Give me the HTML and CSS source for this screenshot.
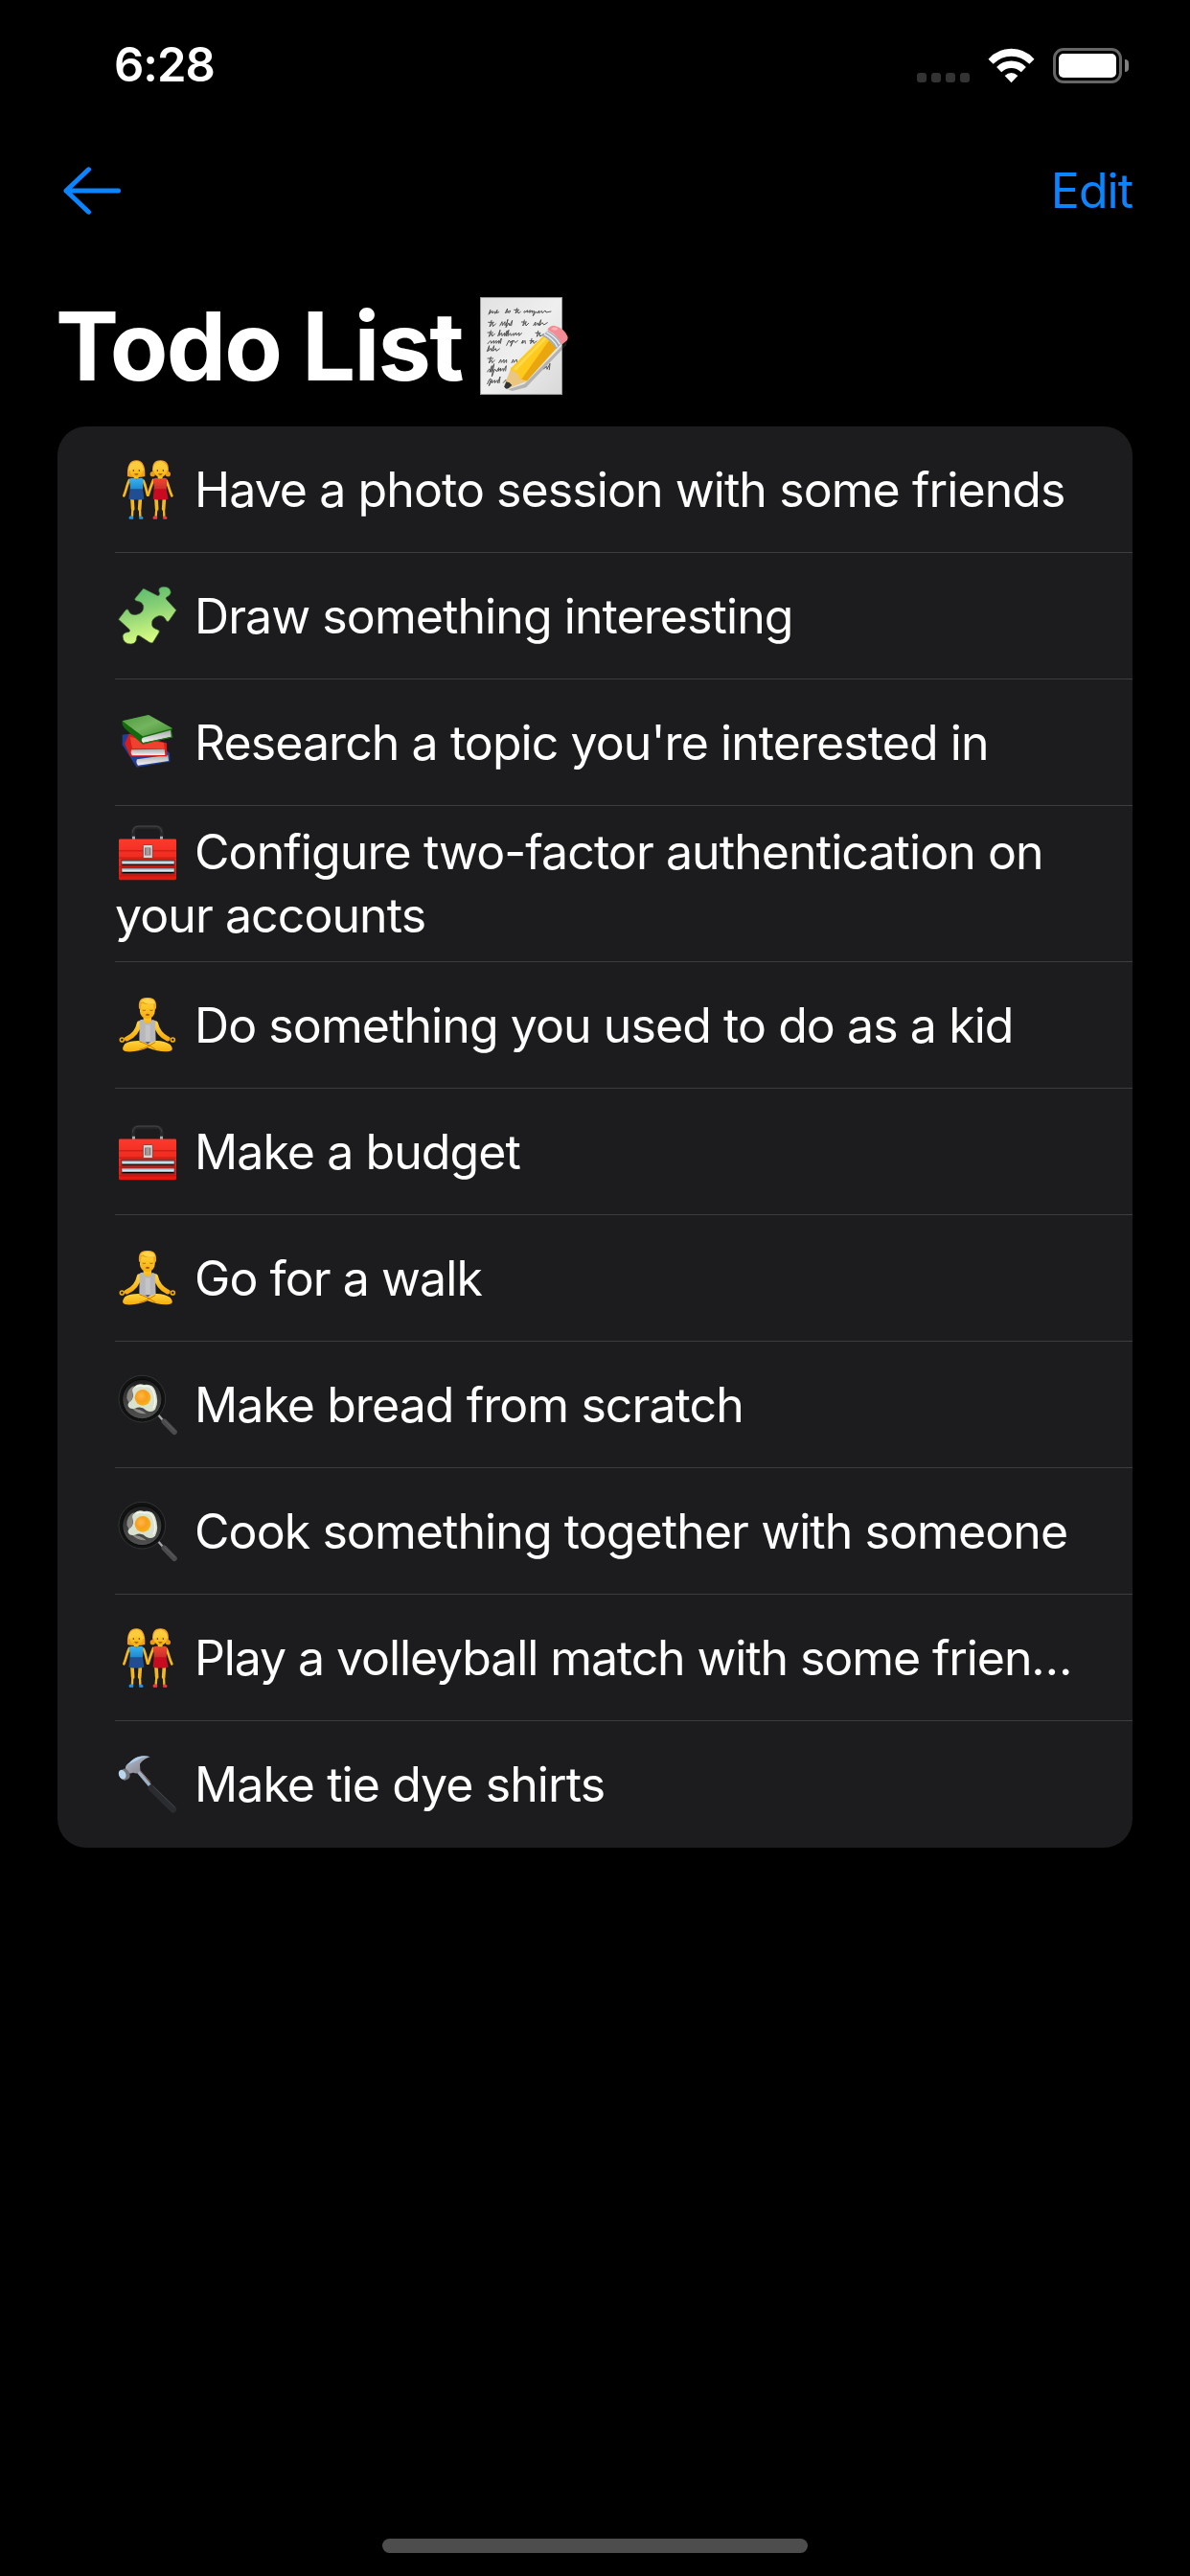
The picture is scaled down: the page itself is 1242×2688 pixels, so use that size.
FILE: index.html
```html
<!DOCTYPE html>
<html lang="en">
<head>
<meta charset="utf-8">
<title>Todo List</title>
<link rel="stylesheet" href="styles.css">
</head>
<body>
<svg class="sprite" aria-hidden="true">
  <defs>
    <linearGradient id="gPuzzle" x1="0" y1="0" x2="0.25" y2="1"><stop offset="0" stop-color="#4fb86c"/><stop offset=".45" stop-color="#86cf75"/><stop offset="1" stop-color="#d6fb82"/></linearGradient>
    <linearGradient id="gBook" x1="0" y1="0" x2="1" y2="1"><stop offset="0" stop-color="#4c9a3c"/><stop offset=".5" stop-color="#74b45f"/><stop offset="1" stop-color="#3c8c2c"/></linearGradient>
    <linearGradient id="gPages" x1="0" y1="0" x2="0" y2="1"><stop offset="0" stop-color="#a9a9a9"/><stop offset="1" stop-color="#f4f4f4"/></linearGradient>
    <linearGradient id="gBox" x1="0" y1="0" x2="0" y2="1"><stop offset="0" stop-color="#fb3a2c"/><stop offset="1" stop-color="#e3190f"/></linearGradient>
    <linearGradient id="gSkin" x1="0" y1="0" x2="0" y2="1"><stop offset="0" stop-color="#ffd43c"/><stop offset="1" stop-color="#f5ae0c"/></linearGradient>
    <linearGradient id="gBlueTop" x1="0" y1="0" x2="0" y2="1"><stop offset="0" stop-color="#38b4f4"/><stop offset="1" stop-color="#1f86cc"/></linearGradient>
    <linearGradient id="gRedTop" x1="0" y1="0" x2="0" y2="1"><stop offset="0" stop-color="#f04a34"/><stop offset="1" stop-color="#c92c28"/></linearGradient>
    <radialGradient id="gYolk" cx=".4" cy=".4" r=".6"><stop offset="0" stop-color="#ffb84a"/><stop offset=".6" stop-color="#f89e1c"/><stop offset="1" stop-color="#f5b416"/></radialGradient>
    <linearGradient id="gPan" x1="0" y1="0" x2="0" y2="1"><stop offset="0" stop-color="#1c1c1c"/><stop offset=".5" stop-color="#3c3c3c"/><stop offset="1" stop-color="#505050"/></linearGradient>
    <linearGradient id="gSteel" x1="0" y1="0" x2="1" y2="1"><stop offset="0" stop-color="#a9c4de"/><stop offset=".5" stop-color="#9a9ca8"/><stop offset="1" stop-color="#85808a"/></linearGradient>
    <linearGradient id="gPaper" x1="0" y1="0" x2="1" y2="1"><stop offset="0" stop-color="#e2e2e2"/><stop offset=".5" stop-color="#efefef"/><stop offset="1" stop-color="#d8d8d8"/></linearGradient>

    <symbol id="friends" viewBox="30 9 216 216">
      <g fill="none" stroke="#f5b81c" stroke-linecap="round">
        <path stroke-width="8" d="M75 96C68 108 66 126 58 145M119 98C126 112 128 128 132 143"/>
        <path stroke-width="8" d="M150 96C144 112 138 128 134 143M191 98C198 112 200 128 208 145"/>
        <path stroke-width="11" d="M84 156L86 186M109 156L107 186M159 156L161 186M184 156L182 186"/>
        <path stroke-width="7" d="M85 186L84 208M108 186L109 208M160 186L158 208M183 186L184 208"/>
      </g>
      <path fill="#2196e8" d="M75 210q7-5 13 1l-1 7H75q-3-4 0-8zM105 211q6-6 13 1 1 4-1 6h-11z"/>
      <path fill="#ee3a44" d="M150 210q7-5 13 1l-1 7h-12q-3-4 0-8zM180 211q6-6 13 1 1 4-1 6h-11z"/>
      <path fill="#f0a01c" d="M69 84Q66 34 97 34Q126 34 124 84Q112 88 97 87Q78 88 69 84z"/>
      <path fill="#f8c229" d="M89 78h15v14H89z"/>
      <circle fill="#e99b12" cx="148" cy="77" r="8"/><circle fill="#e99b12" cx="196" cy="77" r="8"/>
      <path fill="#f0a01c" d="M148 72Q143 34 172 34Q202 34 197 72Z"/>
      <path fill="#f8c229" d="M164 78h15v14h-15z"/>
      <ellipse fill="url(#gSkin)" cx="97" cy="67" rx="20" ry="20"/><ellipse fill="url(#gSkin)" cx="172" cy="67" rx="20" ry="20"/>
      <path fill="#f9cb3f" d="M72 67Q73 38 99 36Q118 40 120 67Q107 62 101 47Q94 61 72 67zM149 66Q150 38 174 36Q193 42 196 66Q182 60 177 47Q168 61 149 66z"/>
      <path stroke="#70400d" stroke-width="4" stroke-linecap="round" d="M88 65v2M106 65v2M163 65v2M181 65v2"/>
      <path fill="#94500f" d="M90 76h14q-7 9-14 0zM165 76h14q-7 9-14 0z"/>
      <path fill="url(#gBlueTop)" d="M76 92Q82 88 88 90Q97 97 106 90Q113 88 119 93L117 126H77Q79 111 74 99z"/>
      <path fill="#214e92" d="M77 124h40l4 31q-24 5-48 0z"/>
      <path fill="url(#gRedTop)" d="M151 92Q157 88 163 90Q172 97 181 90Q188 88 193 93L191 126H152Q154 111 149 99z"/>
      <path fill="#c80b20" d="M152 124h39l6 31q-25 5-48 0z"/>
    </symbol>

    <symbol id="puzzle" viewBox="30 15 216 216">
      <path fill="url(#gPuzzle)" stroke="#40592f" stroke-width="2" stroke-linejoin="round" d="M119 45L162 67Q169 70 170 61Q161 43 180 40Q203 38 205 58Q203 68 192 72Q186 76 195 84L222 113L198 148Q192 151 188 141Q181 129 166 131Q142 139 146 161Q149 170 163 174Q171 176 168 183L149 214Q145 218 137 213L108 194Q99 189 98 199Q98 217 81 219Q56 220 54 195Q55 184 69 182Q80 181 75 173L41 142L64 112Q71 106 74 117Q80 130 98 127Q122 122 119 99Q115 87 100 85Q88 82 94 75Z"/>
    </symbol>

    <symbol id="books" viewBox="30 21 216 216">
      <path fill="#203f98" d="M53 113L76 110L194 164L201 171L202 197L98 215L53 145z"/>
      <path fill="url(#gPages)" d="M99 190L196 176L198 195L102 209Q94 200 99 190z"/>
      <path fill="#d81e1a" d="M74 110L192 139L193 181L78 181L60 141z"/>
      <path fill="#ef4130" d="M77 120L183 139L185 157L84 156z"/>
      <path fill="url(#gPages)" d="M82 160L185 158L187 177L84 178Q77 169 82 160z"/>
      <path fill="#14680e" d="M53 70L135 51L210 93L207 99L211 120L117 143L61 94Q50 83 53 70z"/>
      <path fill="url(#gBook)" d="M53 70L135 51L210 93L117 118z"/>
      <path fill="url(#gPages)" d="M117 122L204 99L206 119L118 138Q109 130 117 122z"/>
      <path fill="none" stroke="#257918" stroke-width="3" d="M117 140L211 120"/>
    </symbol>

    <symbol id="toolbox" viewBox="30 4.5 216 216">
      <path fill="none" stroke="#29292b" stroke-width="11" d="M87 78V60Q87 43 103 43H159Q176 43 176 60V78"/>
      <path fill="none" stroke="#515155" stroke-width="2" d="M85 61Q86 42 104 41H158Q174 42 177 60"/>
      <path fill="#9dafb7" d="M84 73h9v10h-9zM171 73h9v10h-9z"/>
      <rect x="42" y="81" width="180" height="128" rx="4" fill="url(#gBox)"/>
      <path stroke="#a80d0a" stroke-width="2" d="M43 118H221M43 140H221M43 169H221M43 196H221"/>
      <path stroke="#7c2925" stroke-width="4" d="M51 147H216V164H51zM51 173H216V190H51z"/>
      <path fill="#dce9f0" d="M52 150H215V159H52zM52 174H215V184H52z"/>
      <path fill="#83b6c7" d="M52 150H215V153H52zM52 174H215V177H52z"/>
      <rect x="118" y="99" width="30" height="42" rx="2" fill="#d7d4d3" stroke="#78201c" stroke-width="2"/>
      <rect x="123" y="108" width="19" height="24" fill="#7f7476"/><rect x="127" y="110" width="11" height="20" fill="#a99b9a"/>
    </symbol>

    <symbol id="yoga" viewBox="30 6 216 216">
      <g fill="none" stroke="url(#gSkin)" stroke-linecap="round" stroke-linejoin="round">
        <path stroke-width="15" d="M106 116Q99 151 67 165M157 116Q165 151 195 165"/>
        <circle cx="52" cy="168" r="6" stroke-width="5" stroke="#edaa10"/><circle cx="211" cy="168" r="6" stroke-width="5" stroke="#edaa10"/>
      </g>
      <path fill="url(#gSkin)" d="M119 88h25v20l15 6q-27 20-54 0l14-6z"/>
      <path fill="#b8b8bc" d="M107 108Q109 104 119 104Q122 117 132 117Q142 117 146 104L156 108L158 180H106z"/>
      <path fill="#ececef" opacity=".25" d="M125 121h15v54h-15z"/>
      <path fill="url(#gSkin)" d="M106 171Q75 171 61 181Q45 203 67 205Q103 207 132 193Q171 208 200 204Q217 201 203 183Q183 170 158 171L132 181z"/>
      <path fill="none" stroke="#c77b09" stroke-width="3" d="M105 173Q126 178 158 199M106 199Q127 194 157 175"/>
      <path fill="#37518d" d="M124 175h17l-8 6z"/>
      <rect x="108" y="43" width="47" height="59" rx="23" fill="url(#gSkin)"/>
      <path fill="#efa81c" d="M105 69Q101 34 131 36Q162 33 159 69L153 77L150 57Q127 59 113 53L110 76z"/>
      <path fill="#ffd34b" d="M109 52Q115 38 134 39Q153 40 156 55Q129 60 118 48z"/>
      <path fill="none" stroke="#9b5c09" stroke-width="2.5" d="M116 75q6 3 10 0M139 75q5 3 10 0"/><path fill="#ac5820" d="M125 90q7-8 14 0-7 6-14 0z"/>
    </symbol>

    <symbol id="pan" viewBox="30 9 216 216">
      <path fill="none" stroke="#a9a9aa" stroke-width="7" d="M165 157L182 176"/>
      <path stroke="#4b4a4c" stroke-width="17" stroke-linecap="round" d="M184 178L216 211"/>
      <path stroke="#69686a" stroke-width="2" stroke-linecap="round" d="M185 175L216 206"/>
      <circle cx="115" cy="107" r="73" fill="#111212" stroke="#404142" stroke-width="2"/>
      <circle cx="115" cy="108" r="62" fill="url(#gPan)" stroke="#080909" stroke-width="3"/>
      <path fill="#bcb9b1" opacity=".6" d="M67 106Q66 77 89 66L85 103L76 123zM84 137Q111 138 128 154Q101 155 84 137z"/>
      <path fill="#d9e1cf" d="M91 68Q103 56 121 63Q147 58 156 81Q169 115 156 140Q144 153 128 143Q111 127 93 137Q77 141 72 131Q67 122 80 114Q89 103 86 88Q81 76 91 68z"/>
      <path fill="none" stroke="#fff" stroke-width="4" opacity=".7" d="M95 71Q106 62 121 69Q143 64 150 85Q161 116 150 136"/>
      <circle cx="117" cy="103" r="25" fill="url(#gYolk)"/>
    </symbol>

    <symbol id="hammer" viewBox="30 27 216 216">
      <path stroke="#9eb1c4" stroke-width="11" d="M99 99L140 148"/><path stroke="#a77368" stroke-width="3" d="M107 99L141 137"/>
      <path stroke="#2b2c2f" stroke-width="21" stroke-linecap="round" d="M144 155L212 222"/>
      <path stroke="#404246" stroke-width="3" stroke-linecap="round" d="M150 151L218 216"/>
      <path fill="url(#gSteel)" d="M63 96Q61 82 77 76Q92 57 115 55Q130 53 140 58Q118 65 108 80L109 99Q101 114 88 107L75 110z"/>
      <path fill="#adcee8" d="M68 83Q85 60 112 56Q129 54 137 58Q115 58 101 68z"/>
      <path fill="#74757b" d="M43 104L57 95Q67 91 75 108Q80 120 72 127L60 132Q40 122 43 104z"/>
      <ellipse cx="53" cy="113" rx="11" ry="15" fill="#b9d6ec" transform="rotate(-22 53 113)"/>
    </symbol>

    <symbol id="memo" viewBox="60 30 276 306">
      <rect x="61" y="31" width="256" height="304" fill="url(#gPaper)" stroke="#9b9b9b" stroke-width="2"/>
      <g fill="none" stroke="#4a4a4a" stroke-width="2.8" stroke-linecap="round" stroke-linejoin="round">
        <path d="M87 84q8-18 5-14l-2 12 8-9 1 8q6-11 7-4l1 5 7-12-2 10 7-3M139 80l7-14-3 13 8-5q6-4 3 3-7 6-5-2M167 70h15m-6-5l-5 16 7-8 2 8 7-5M199 80q-5-2 1-7l3 5 5-7 1 7 8-7-2 8 8-7 0 7q5-8 7-5l-4 15 9-14 4 6 6-9 0 8 8-7 2 7 9-8 3 6 15-3"/>
        <path d="M86 109h17m-7-6l-6 20 9-12 1 11 9-8M122 120l7-13 1 12 8-12 0 12 7-10 2-9-6 25 9-14 3 9 8-17-3 16M190 108h16m-7-6l-5 18 8-10 2 10 8-8M227 119l7-11-1 11 8-8 2 8 8-18-4 18 8-9 5 7 11-7"/>
        <path d="M84 141h16m-6-6l-6 19 8-10 2 9 8-8M116 152l7-19-3 18 8-9 1 10 8-10 0 10 8-17-3 17 8-19-3 19 8-9 2 8 8-8 0 8 8-10 1 9 9-9-1 10 9-8M234 142h15m-7-6l-4 18 8-10 2 9 11-7"/>
        <path d="M84 176l8-9q5-1 3 8l8-9 0 9 8-9 0 9 8-9 0 9 8-16-3 16M143 181l7-15q5-1 4 7l7-7-5 18 9-19 6 8 7-7M190 174l5-9-2 10 8-9 1 9M216 167h12m-6-7l-4 16 8-10 2 9 9-7M82 200l7-18-3 17 8-9 2 9 8-17-3 17 8-8 2 8 10-7"/>
        <path d="M84 222h17m-7-5l-6 20 8-10 2 9 8-8M119 236l6-11 2 10 8-10 0 11 8-10 0 9M159 236l5-11 2 10 8-10 2 9M83 264q6-13 9-7l-2 8 7-20-2 20 9-26-7 40 9-24 6 8 7-12-2 11 8-10-1 10 8-9 1 9 9-17-2 16M83 302q7-20 11-16l-6 22 10-19 0 10 8-9 0 9 8-9 1 9 8-20-3 20M133 298l8-9 2 9 8-18M260 254l9-7 1 9 9-18-2 19"/>
      </g>
      <path opacity=".35" fill="#555" d="M148 319L199 302L333 166L330 181L204 313L160 324z"/>
      <path fill="#eac681" d="M158 250L137 304Q135 320 151 315L205 294L213 275L179 248z"/>
      <path fill="#303336" d="M142 295L136 310Q138 320 149 316L160 306Q153 296 142 295z"/>
      <path fill="#ffc91e" d="M155 254L259 151Q285 164 299 190L207 292Q198 293 190 287Q181 285 182 275L171 263Q161 265 155 254z"/>
      <path fill="#eaa60e" d="M276 166L299 190L207 292L190 287z"/>
      <path fill="#ffdb4c" d="M165 255L263 155L270 159L172 260z"/>
      <path fill="#a4acb5" d="M254 151L273 135Q306 154 315 176L298 193Q283 166 254 151z"/>
      <path fill="none" stroke="#e9eef3" stroke-width="4" d="M261 146Q290 162 302 186M269 140Q298 156 310 178"/>
      <path fill="#f38c94" d="M271 132Q281 117 295 120Q324 128 334 153Q338 164 327 170L316 179Q307 153 271 132z"/>
      <path fill="#ffb2b5" d="M282 130Q292 120 304 128Q299 139 282 130z"/>
    </symbol>
  </defs>
</svg>
<div class="screen">
  <header class="status">
    <span class="time">6:28</span>
    <div class="indicators">
      <div class="cellular"><i></i><i></i><i></i><i></i></div>
      <svg class="wifi" viewBox="0 0 50 37"><g fill="#fff"><path d="M.5 11.5Q10.500 .5 25 .5Q39.500 .5 49.500 11.500L44.200 16.800Q36 8.500 25 8.500Q14 8.500 5.800 16.800z"/><path d="M9.300 20Q16 13.500 25 13.500Q34 13.500 40.700 20L35.500 25.500Q31 21 25 21Q19 21 14.500 25.500z"/><path d="M18 29.200Q25 23 32 29.200L25 36.500z"/></g></svg>
      <div class="battery"><span class="charge"></span><span class="terminal"></span></div>
    </div>
  </header>
  <nav class="nav">
    <svg class="back" viewBox="0 0 60 50"><path d="M26.500 2.800L3 25L26.500 47.200M3 25H57.500"/></svg>
    <span class="edit">Edit</span>
  </nav>
  <h1 class="heading"><span>Todo List</span><svg class="memo"><use href="#memo"/></svg></h1>
  <ul class="list">
    <li class="row"><p><svg class="emoji"><use href="#friends"/></svg><span>Have a photo session with some friends</span></p></li>
    <li class="row"><p><svg class="emoji"><use href="#puzzle"/></svg><span>Draw something interesting</span></p></li>
    <li class="row"><p><svg class="emoji"><use href="#books"/></svg><span>Research a topic you're interested in</span></p></li>
    <li class="row tall"><p><svg class="emoji"><use href="#toolbox"/></svg><span>Configure two-factor authentication on<br>your accounts</span></p></li>
    <li class="row"><p><svg class="emoji"><use href="#yoga"/></svg><span>Do something you used to do as a kid</span></p></li>
    <li class="row"><p><svg class="emoji"><use href="#toolbox"/></svg><span>Make a budget</span></p></li>
    <li class="row"><p><svg class="emoji"><use href="#yoga"/></svg><span>Go for a walk</span></p></li>
    <li class="row"><p><svg class="emoji"><use href="#pan"/></svg><span>Make bread from scratch</span></p></li>
    <li class="row"><p><svg class="emoji"><use href="#pan"/></svg><span>Cook something together with someone</span></p></li>
    <li class="row truncated"><p><svg class="emoji"><use href="#friends"/></svg><span>Play a volleyball match with some frien…</span></p></li>
    <li class="row"><p><svg class="emoji"><use href="#hammer"/></svg><span>Make tie dye shirts</span></p></li>
  </ul>
  <div class="home"></div>
</div>
</body>
</html>
```
FILE: styles.css
```css
* { box-sizing: border-box; }
body { margin: 0; background: #000; color: #fff; font-family: Inter, "Liberation Sans", sans-serif; }
.sprite { position: absolute; width: 0; height: 0; }
.screen { width: 1242px; height: 2688px; display: flex; flex-direction: column; }

.status { height: 136px; padding: 0 64px 0 119px; display: flex; justify-content: space-between; align-items: center; }
.time { font-size: 49px; font-weight: 600; line-height: 60px; letter-spacing: -1px; }
.indicators { display: flex; align-items: flex-end; height: 37px; }
.cellular { display: flex; gap: 5px; margin: 0 19px 1px 0; }
.cellular i { width: 10px; height: 10px; border-radius: 3px; background: #333; }
.wifi { width: 49px; height: 37px; margin-right: 19px; }
.battery { position: relative; width: 72px; height: 37px; margin-right: 7px; padding: 3px; border: 3px solid #666; border-radius: 11px; }
.charge { display: block; height: 100%; border-radius: 5px; background: #fff; }
.terminal { position: absolute; left: 72px; top: 9px; width: 4px; height: 13px; border-radius: 0 4px 4px 0; background: #808080; }

.nav { height: 126px; padding: 0 60px 0 66px; display: flex; align-items: center; justify-content: space-between; }
.back { width: 60px; height: 50px; fill: none; stroke: #0a84ff; stroke-width: 5; stroke-linecap: round; stroke-linejoin: round; }
.edit { color: #0a84ff; font-size: 50px; line-height: 60px; letter-spacing: -1px; }

.heading { margin: 0; height: 183px; padding: 39px 0 0 58px; display: flex; align-items: flex-start; font-size: 99px; font-weight: 700; line-height: 120px; letter-spacing: -1.7px; white-space: nowrap; }
.memo { width: 92px; height: 102px; margin: 9px 0 0 18px; }

.list { width: 1122px; margin: 0 60px; padding: 0; list-style: none; background: #1c1c1e; border-radius: 30px; overflow: hidden; }
.row { height: 132px; margin-left: 60px; display: flex; align-items: center; border-bottom: 1px solid #3d3d41; }
.row:last-child { border-bottom: 0; }
.row.tall { height: 163px; }
.row p { margin: 0; font-size: 50px; line-height: 66px; letter-spacing: -.92px; white-space: nowrap; }
.row.truncated p { letter-spacing: -1.1px; }
.emoji { width: 72px; height: 72px; margin: -10px 11px -10px 0; vertical-align: -5px; }
.home { width: 444px; height: 15px; margin: auto auto 24px; border-radius: 8px; background: #4d4d4d; }
```
